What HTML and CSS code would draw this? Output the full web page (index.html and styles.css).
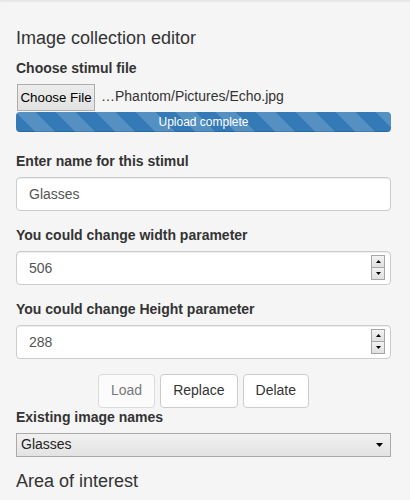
FILE: index.html
```html
<!DOCTYPE html>
<html>
<head>
<meta charset="utf-8">
<link rel="stylesheet" href="styles.css">
</head>
<body>
<div class="well">
  <h4 class="heading">Image collection editor</h4>
  <label class="lbl">Choose stimul file</label>
  <div class="file-row">
    <span class="file-btn">Choose File</span>
    <span class="file-name">…Phantom/Pictures/Echo.jpg</span>
  </div>
  <div class="progress"><div class="progress-bar">Upload complete</div></div>

  <div class="form-group">
    <label class="lbl">Enter name for this stimul</label>
    <div class="field"><input class="form-control" type="text" value="Glasses"></div>
  </div>

  <div class="form-group">
    <label class="lbl">You could change width parameter</label>
    <div class="field">
      <input class="form-control" type="text" value="506">
      <span class="spin">
        <span class="spin-half"><svg width="5" height="3" viewBox="0 0 5 3"><path d="M0 3 L2.5 0 L5 3Z" fill="#000"/></svg></span>
        <span class="spin-half"><svg width="5" height="3" viewBox="0 0 5 3"><path d="M0 0 L2.5 3 L5 0Z" fill="#000"/></svg></span>
      </span>
    </div>
  </div>

  <div class="form-group">
    <label class="lbl">You could change Height parameter</label>
    <div class="field">
      <input class="form-control" type="text" value="288">
      <span class="spin">
        <span class="spin-half"><svg width="5" height="3" viewBox="0 0 5 3"><path d="M0 3 L2.5 0 L5 3Z" fill="#000"/></svg></span>
        <span class="spin-half"><svg width="5" height="3" viewBox="0 0 5 3"><path d="M0 0 L2.5 3 L5 0Z" fill="#000"/></svg></span>
      </span>
    </div>
  </div>

  <div class="btn-row">
    <button class="btn" disabled>Load</button>
    <button class="btn">Replace</button>
    <button class="btn">Delate</button>
  </div>

  <div class="form-group">
    <label class="lbl">Existing image names</label>
    <div class="select">
      <span class="select-text">Glasses</span>
      <svg class="select-arrow" width="7" height="4" viewBox="0 0 7 4"><path d="M0 0 L7 0 L3.5 4Z" fill="#000"/></svg>
    </div>
  </div>

  <h4 class="heading heading-area">Area of interest</h4>
</div>
</body>
</html>
```

FILE: styles.css
```css
html, body {
  margin: 0;
  padding: 0;
}
body {
  font-family: "Liberation Sans", Arial, sans-serif;
  font-size: 14px;
  line-height: 1.42857;
  color: #333;
  background: #f5f5f5;
}
.well {
  min-height: 500px;
  box-sizing: border-box;
  padding: 18px 19px 0 16px;
  background: #f5f5f5;
  border-top: 1px solid #e6e6e6;
  box-shadow: inset 0 1px 1px rgba(0,0,0,.05);
}
.heading {
  font-size: 18px;
  font-weight: normal;
  line-height: 1.1;
  margin: 10px 0 10px;
  color: #333;
}
.heading-area {
  margin-top: 0;
}
.lbl {
  display: inline-block;
  font-weight: bold;
  margin-bottom: 5px;
}
.file-row {
  display: flex;
  align-items: center;
  height: 27px;
}
.file-btn {
  box-sizing: border-box;
  height: 27px;
  width: 78px;
  margin-left: 1px;
  display: flex;
  align-items: center;
  justify-content: center;
  font-size: 13.33px;
  color: #000;
  background: linear-gradient(#ececec, #e2e2e2);
  border: 1px solid #adadad;
}
.file-name {
  margin-left: 6px;
  font-size: 14px;
  color: #333;
}
.progress {
  margin-top: 1px;
  height: 20px;
  margin-bottom: 20px;
  border-radius: 4px;
  overflow: hidden;
  background: #f5f5f5;
}
.progress-bar {
  height: 20px;
  width: 100%;
  background-color: #337ab7;
  background-image: linear-gradient(45deg, rgba(255,255,255,.17) 25%, transparent 25%, transparent 50%, rgba(255,255,255,.17) 50%, rgba(255,255,255,.17) 75%, transparent 75%, transparent);
  background-size: 40px 40px;
  color: #fff;
  font-size: 12px;
  line-height: 20px;
  text-align: center;
  box-shadow: inset 0 -1px 0 rgba(0,0,0,.15);
}
.form-group {
  margin-bottom: 15px;
}
.field {
  position: relative;
}
.form-control {
  display: block;
  width: 100%;
  box-sizing: border-box;
  height: 34px;
  padding: 6px 12px;
  font-family: inherit;
  font-size: 14px;
  line-height: 1.42857;
  color: #555;
  background: #fff;
  border: 1px solid #ccc;
  border-radius: 4px;
  box-shadow: inset 0 1px 1px rgba(0,0,0,.075);
  outline: none;
}
.spin {
  position: absolute;
  right: 6px;
  top: 4px;
  width: 14px;
  height: 25px;
  display: flex;
  flex-direction: column;
}
.spin-half {
  flex: 1;
  box-sizing: border-box;
  border: 1px solid #a6a6a6;
  background: linear-gradient(#f2f2f2, #e0e0e0);
  display: flex;
  align-items: center;
  justify-content: center;
}
.spin-half + .spin-half {
  border-top: none;
}
.btn-row {
  display: flex;
  justify-content: center;
  gap: 5px;
}
.btn {
  box-sizing: border-box;
  height: 34px;
  padding: 6px 12px;
  font-family: inherit;
  font-size: 14px;
  line-height: 1.42857;
  color: #333;
  background: #fff;
  border: 1px solid #ccc;
  border-radius: 4px;
}
.btn[disabled] {
  opacity: .65;
}
.select {
  box-sizing: border-box;
  height: 24px;
  display: flex;
  align-items: center;
  justify-content: space-between;
  padding: 0 7px 0 4px;
  border: 1px solid #a9a9a9;
  background: linear-gradient(#f1f1f1, #e3e3e3);
  font-size: 14px;
  color: #222;
}
.select-arrow {
  display: block;
}
```
